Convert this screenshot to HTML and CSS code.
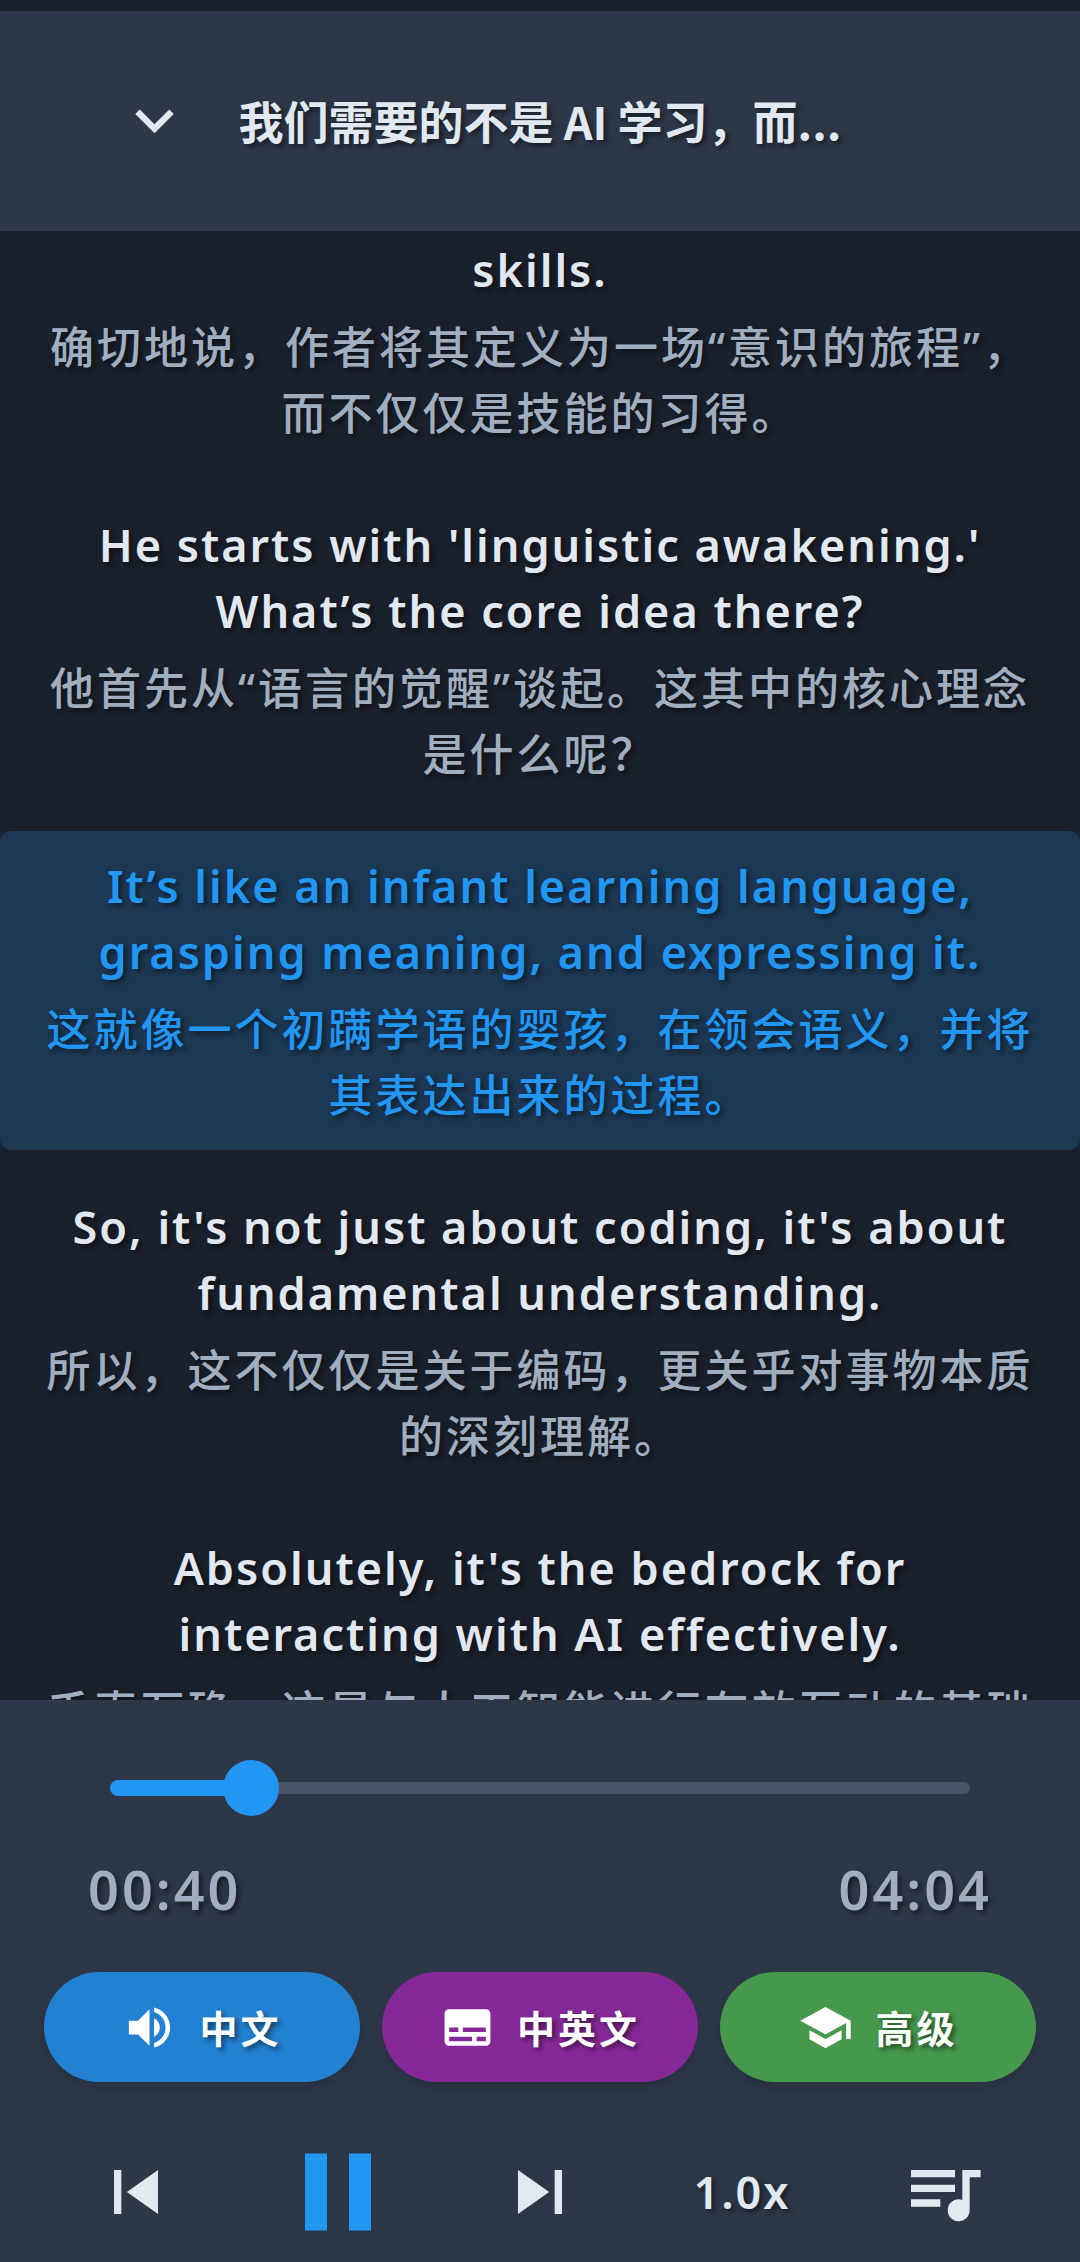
FILE: index.html
```html
<!DOCTYPE html>
<html lang="zh-CN">
<head>
<meta charset="utf-8">
<meta name="viewport" content="width=device-width, initial-scale=1">
<title>我们需要的不是 AI 学习，而...</title>
<link rel="stylesheet" href="styles.css">
</head>
<body>
<div class="player">
  <header class="topbar">
    <button class="icon-button collapse" type="button" aria-label="收起">
      <svg viewBox="0 0 24 24" aria-hidden="true"><path d="M7.41 8.59 12 13.17l4.59-4.58L18 10l-6 6-6-6 1.41-1.41z"/></svg>
    </button>
    <h1 class="title">我们需要的不是 AI 学习，而...</h1>
  </header>

  <main class="lyrics">
    <section class="verse">
      <p class="en">skills.</p>
      <p class="zh">确切地说，作者将其定义为一场“意识的旅程”，<br>而不仅仅是技能的习得。</p>
    </section>
    <section class="verse">
      <p class="en">He starts with 'linguistic awakening.'<br>What’s the core idea there?</p>
      <p class="zh">他首先从“语言的觉醒”谈起。这其中的核心理念<br>是什么呢？</p>
    </section>
    <section class="verse active">
      <p class="en">It’s like an infant learning language,<br>grasping meaning, and expressing it.</p>
      <p class="zh">这就像一个初蹒学语的婴孩，在领会语义，并将<br>其表达出来的过程。</p>
    </section>
    <section class="verse">
      <p class="en">So, it's not just about coding, it's about<br>fundamental understanding.</p>
      <p class="zh">所以，这不仅仅是关于编码，更关乎对事物本质<br>的深刻理解。</p>
    </section>
    <section class="verse">
      <p class="en">Absolutely, it's the bedrock for<br>interacting with AI effectively.</p>
      <p class="zh">千真万确，这是与人工智能进行有效互动的基础</p>
    </section>
  </main>

  <footer class="panel">
    <div class="seek">
      <span class="rail"><span class="fill" style="width: 16.4%"></span></span>
      <input class="range" type="range" min="0" max="244" value="40" aria-label="播放进度">
    </div>
    <div class="times"><span>00:40</span><span>04:04</span></div>
    <div class="modes">
      <button class="pill blue" type="button">
        <svg viewBox="0 0 24 24" aria-hidden="true"><path d="M3 9v6h4l5 5V4L7 9H3zm13.5 3c0-1.77-1.02-3.29-2.5-4.03v8.05c1.48-.73 2.5-2.25 2.5-4.02zM14 3.23v2.06c2.89.86 5 3.54 5 6.71s-2.11 5.85-5 6.71v2.06c4.01-.91 7-4.49 7-8.77s-2.99-7.86-7-8.77z"/></svg>
        <span>中文</span>
      </button>
      <button class="pill purple" type="button">
        <svg viewBox="0 0 24 24" aria-hidden="true"><path fill-rule="evenodd" d="M20 4H4c-1.1 0-2 .9-2 2v12c0 1.100.9 2 2 2h16c1.100 0 2-.9 2-2V6c0-1.100-.9-2-2-2zM4 14h4v-2H4v2zm10 4H4v-2h10v2zm6 0h-4v-2h4v2zm0-4H10v-2h10v2z"/></svg>
        <span>中英文</span>
      </button>
      <button class="pill green" type="button">
        <svg viewBox="0 0 24 24" aria-hidden="true"><path d="M5 13.18v4L12 21l7-3.820v-4L12 17l-7-3.820zM12 3 1 9l11 6 9-4.910V17h2V9L12 3z"/></svg>
        <span>高级</span>
      </button>
    </div>
    <div class="controls">
      <button class="icon-button" type="button" aria-label="上一首">
        <svg viewBox="0 0 24 24" aria-hidden="true"><path d="M6 6h2v12H6zm3.5 6 8.5 6V6z"/></svg>
      </button>
      <button class="icon-button pause" type="button" aria-label="暂停">
        <svg viewBox="2 2 20 20" aria-hidden="true"><path d="M6 19h4V5H6v14zm8-14v14h4V5h-4z"/></svg>
      </button>
      <button class="icon-button" type="button" aria-label="下一首">
        <svg viewBox="0 0 24 24" aria-hidden="true"><path d="M6 18l8.5-6L6 6v12zM16 6v12h2V6h-2z"/></svg>
      </button>
      <button class="icon-button speed" type="button">1.0x</button>
      <button class="icon-button" type="button" aria-label="播放列表">
        <svg viewBox="0 0 24 24" aria-hidden="true"><path d="M15 6H3v2h12V6zm0 4H3v2h12v-2zM3 16h8v-2H3v2zM17 6v8.18c-.31-.11-.65-.18-1-.18-1.66 0-3 1.34-3 3s1.34 3 3 3 3-1.34 3-3V8h3V6h-5z"/></svg>
      </button>
    </div>
  </footer>
</div>
</body>
</html>
```
FILE: styles.css
```css
* {
  box-sizing: border-box;
  margin: 0;
}

body {
  background: #1a202c;
  color: #e2e8f0;
  font-family: "Noto Sans", "Noto Sans CJK SC", sans-serif;
}

button {
  border: 0;
  background: none;
  color: inherit;
  font: inherit;
}

svg {
  display: block;
  fill: currentColor;
}

.player {
  display: flex;
  flex-direction: column;
  height: 100vh;
  padding-top: 11px;
  text-shadow: 3px 3px 5px rgba(0, 0, 0, 0.5);
}

/* Top bar */
.topbar {
  display: grid;
  grid-template-columns: 88px 1fr 88px;
  align-items: center;
  flex: none;
  padding: 71px 110px 72px;
  background: #2d3748;
}

.icon-button {
  display: flex;
  align-items: center;
  justify-content: center;
  padding: 0;
}

.icon-button svg {
  width: 88px;
  height: 88px;
}

.collapse svg {
  width: 77px;
  height: 77px;
}

.title {
  overflow: hidden;
  font-family: "Noto Sans CJK SC", sans-serif;
  font-size: 45px;
  font-weight: 700;
  line-height: 66px;
  text-align: center;
  white-space: nowrap;
}

/* Lyrics, clipped where the player panel begins */
.lyrics {
  display: flex;
  flex: 1;
  flex-direction: column;
  gap: 22px;
  min-height: 0;
  overflow: hidden;
}

.verse {
  display: flex;
  flex: none;
  flex-direction: column;
  gap: 11px;
  padding: 22px 0;
  border-radius: 11px;
  line-height: 66px;
  text-align: center;
  white-space: nowrap;
}

.verse:first-child {
  padding-top: 6px;
}

.en {
  font-size: 45px;
  font-weight: 600;
  letter-spacing: 2px;
}

.zh {
  color: #a0aec0;
  font-size: 44px;
  font-weight: 500;
  letter-spacing: 3px;
}

.active {
  background: #1d3853;
}

.active p {
  color: #2196f3;
}

/* Player panel */
.panel {
  flex: none;
  padding: 60px 0 15px;
  background: #2d3748;
}

.seek {
  position: relative;
  margin: 0 82px;
}

.rail {
  position: absolute;
  top: 22px;
  right: 28px;
  left: 28px;
  height: 12px;
  border-radius: 6px;
  background: #4a5568;
}

.fill {
  position: absolute;
  top: -2px;
  left: 0;
  height: 16px;
  border-radius: 8px;
  background: #2196f3;
}

.range {
  position: relative;
  display: block;
  width: 100%;
  height: 56px;
  margin: 0;
  background: none;
  -webkit-appearance: none;
  appearance: none;
}

.range::-webkit-slider-thumb {
  width: 56px;
  height: 56px;
  border-radius: 50%;
  background: #2196f3;
  -webkit-appearance: none;
}

.times {
  display: flex;
  justify-content: space-between;
  padding: 34px 88px 0;
  color: #a0aec0;
  font-size: 54px;
  font-weight: 600;
  letter-spacing: 3px;
  line-height: 78px;
}

.modes {
  display: grid;
  grid-template-columns: repeat(3, 1fr);
  gap: 22px;
  padding: 44px 44px 0;
}

.pill {
  display: flex;
  align-items: center;
  justify-content: center;
  gap: 22px;
  height: 110px;
  border-radius: 55px;
  box-shadow: 0 6px 12px rgba(0, 0, 0, 0.12);
  color: #ffffff;
  font-family: "Noto Sans CJK SC", sans-serif;
  font-size: 38px;
  font-weight: 700;
  letter-spacing: 3px;
  line-height: 56px;
  text-shadow: inherit;
}

.pill svg {
  width: 55px;
  height: 55px;
}

.blue {
  background: #2281d0;
}

.purple {
  background: #862998;
}

.green {
  background: #46984d;
}

.controls {
  display: grid;
  grid-template-columns: repeat(5, 1fr);
  align-items: center;
  padding: 55px 35px 0;
}

.pause {
  color: #2196f3;
}

.pause svg {
  width: 110px;
  height: 110px;
}

.speed {
  font-size: 45px;
  font-weight: 600;
  letter-spacing: 2px;
  line-height: 66px;
  text-shadow: inherit;
}
```
